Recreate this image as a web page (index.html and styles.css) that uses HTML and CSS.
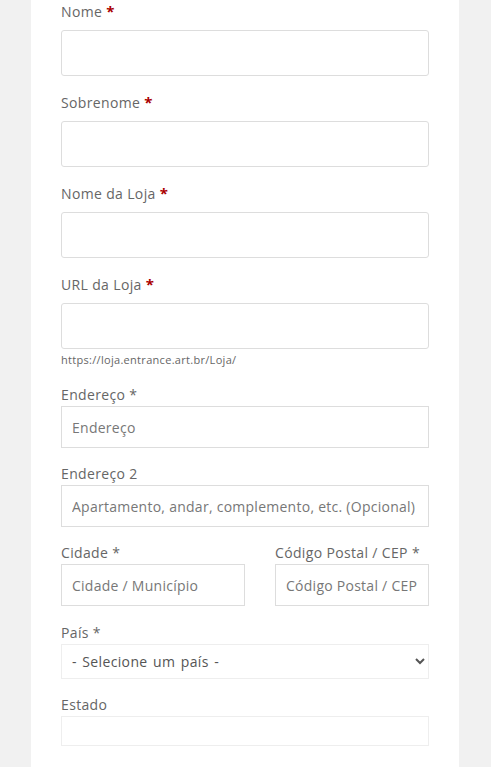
FILE: index.html
```html
<!DOCTYPE html>
<html lang="pt-BR">
<head>
<meta charset="utf-8">
<title>Cadastro de Loja</title>
<link rel="stylesheet" href="styles.css">
</head>
<body>
<div class="panel">
  <form class="form">
    <div class="group">
      <label class="label">Nome <span class="req">*</span></label>
      <input class="field big" type="text">
    </div>
    <div class="group">
      <label class="label">Sobrenome <span class="req">*</span></label>
      <input class="field big" type="text">
    </div>
    <div class="group">
      <label class="label">Nome da Loja <span class="req">*</span></label>
      <input class="field big" type="text">
    </div>
    <div class="group url">
      <label class="label">URL da Loja <span class="req">*</span></label>
      <input class="field big" type="text">
      <div class="hint">https://loja.entrance.art.br/Loja/</div>
    </div>
    <div class="group tight">
      <label class="label">Endereço *</label>
      <input class="field mid" type="text" placeholder="Endereço">
    </div>
    <div class="group tight">
      <label class="label">Endereço 2</label>
      <input class="field mid" type="text" placeholder="Apartamento, andar, complemento, etc. (Opcional)">
    </div>
    <div class="row">
      <div class="group tight">
        <label class="label">Cidade *</label>
        <input class="field mid" type="text" placeholder="Cidade / Município">
      </div>
      <div class="group tight">
        <label class="label">Código Postal / CEP *</label>
        <input class="field mid" type="text" placeholder="Código Postal / CEP">
      </div>
    </div>
    <div class="group tight">
      <label class="label">País *</label>
      <select class="field select">
        <option>- Selecione um país -</option>
      </select>
    </div>
    <div class="group tight">
      <label class="label">Estado</label>
      <input class="field small" type="text">
    </div>
  </form>
</div>
</body>
</html>
```

FILE: styles.css
```css
html, body {
  margin: 0;
  padding: 0;
}
body {
  background: #f1f1f1;
  font-family: "Open Sans", "Liberation Sans", sans-serif;
  font-size: 14px;
  color: #666;
}
.panel {
  margin-left: 31px;
  width: 368px;
  padding: 0 30px;
  background: #fff;
  min-height: 767px;
}
.form {
  display: flex;
  flex-direction: column;
}
.group {
  display: flex;
  flex-direction: column;
  margin-bottom: 15px;
}
.label {
  display: block;
  line-height: 22px;
  height: 22px;
  color: #666;
  font-size: 14px;
  letter-spacing: 0.35px;
  margin-bottom: 8px;
}
.req {
  color: #a00;
  font-weight: 700;
  font-size: 15px;
}
.tight .label {
  margin-bottom: 0;
}
.field {
  box-sizing: border-box;
  width: 100%;
  margin: 0;
  font-family: inherit;
  font-size: 14px;
  letter-spacing: 0.26px;
  color: #666;
  background: #fff;
  outline: none;
}
.field::placeholder {
  color: #777;
  opacity: 1;
}
.big {
  height: 46px;
  border: 1px solid #ddd;
  border-radius: 3px;
  padding: 0 10px;
}
.mid {
  height: 42px;
  border: 1px solid #ddd;
  border-radius: 0;
  padding: 0 10px;
}
.select {
  height: 35px;
  border: 1px solid #eee;
  border-radius: 0;
  padding: 0 6px;
  color: #555;
  letter-spacing: 0.35px;
  word-spacing: 1.5px;
}
.small {
  height: 30px;
  border: 1px solid #eee;
  border-radius: 0;
  padding: 0 10px;
}
.url {
  margin-bottom: 16px;
}
.hint {
  font-size: 11px;
  line-height: 16px;
  letter-spacing: 0.3px;
  margin-top: 3px;
  color: #666;
}
.row {
  display: grid;
  grid-template-columns: 184px 154px;
  column-gap: 30px;
}
.row .group {
  margin-bottom: 16px;
}
```
